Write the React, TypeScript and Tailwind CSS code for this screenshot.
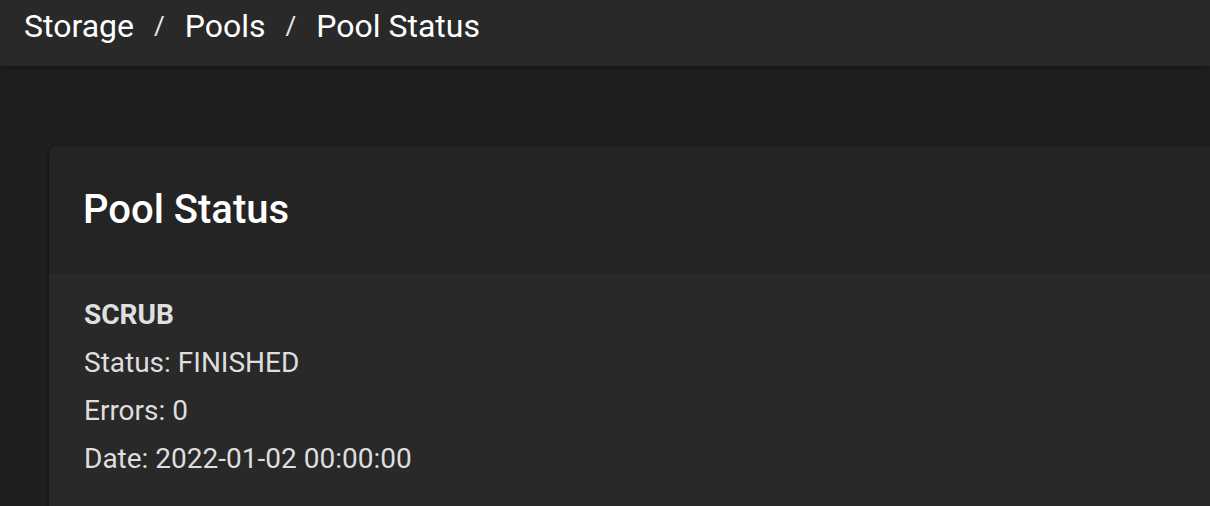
import React from "react";

const App: React.FC = () => {
  return (
    <div className="w-[1210px] h-[506px] overflow-hidden bg-[#1f1f1f] font-['Roboto',sans-serif]">
      <header className="h-[66px] bg-[#292929] flex items-start pt-[2px] pl-[24px] text-[32px] leading-[48px] text-white shadow-[0_2px_4px_rgba(0,0,0,0.3)] relative z-10">
        <span>Storage</span>
        <span className="px-[20px] text-[#e6e6e6] text-[26px]">/</span>
        <span>Pools</span>
        <span className="px-[20px] text-[#e6e6e6] text-[26px]">/</span>
        <span>Pool Status</span>
      </header>
      <div className="flex h-[440px]">
        <div className="w-[2px] bg-[#252525]" />
        <main className="flex-1 pt-[80px] pl-[49px]">
          <section className="w-[1200px] rounded-tl-[8px] overflow-hidden shadow-[-1px_0_3px_rgba(0,0,0,0.35)]">
            <div className="h-[128px] bg-[#242424] flex items-center px-[34px]">
              <h1 className="text-[40px] font-medium text-white">Pool Status</h1>
            </div>
            <div className="bg-[#292929] px-[35px] pt-[17px] pb-[40px] text-[28px] text-[#dedede] leading-[48px]">
              <div className="font-bold text-[#e0e0e0]">SCRUB</div>
              <div>Status: FINISHED</div>
              <div>Errors: 0</div>
              <div>Date: 2022-01-02 00:00:00</div>
            </div>
          </section>
        </main>
      </div>
    </div>
  );
};

export default App;
